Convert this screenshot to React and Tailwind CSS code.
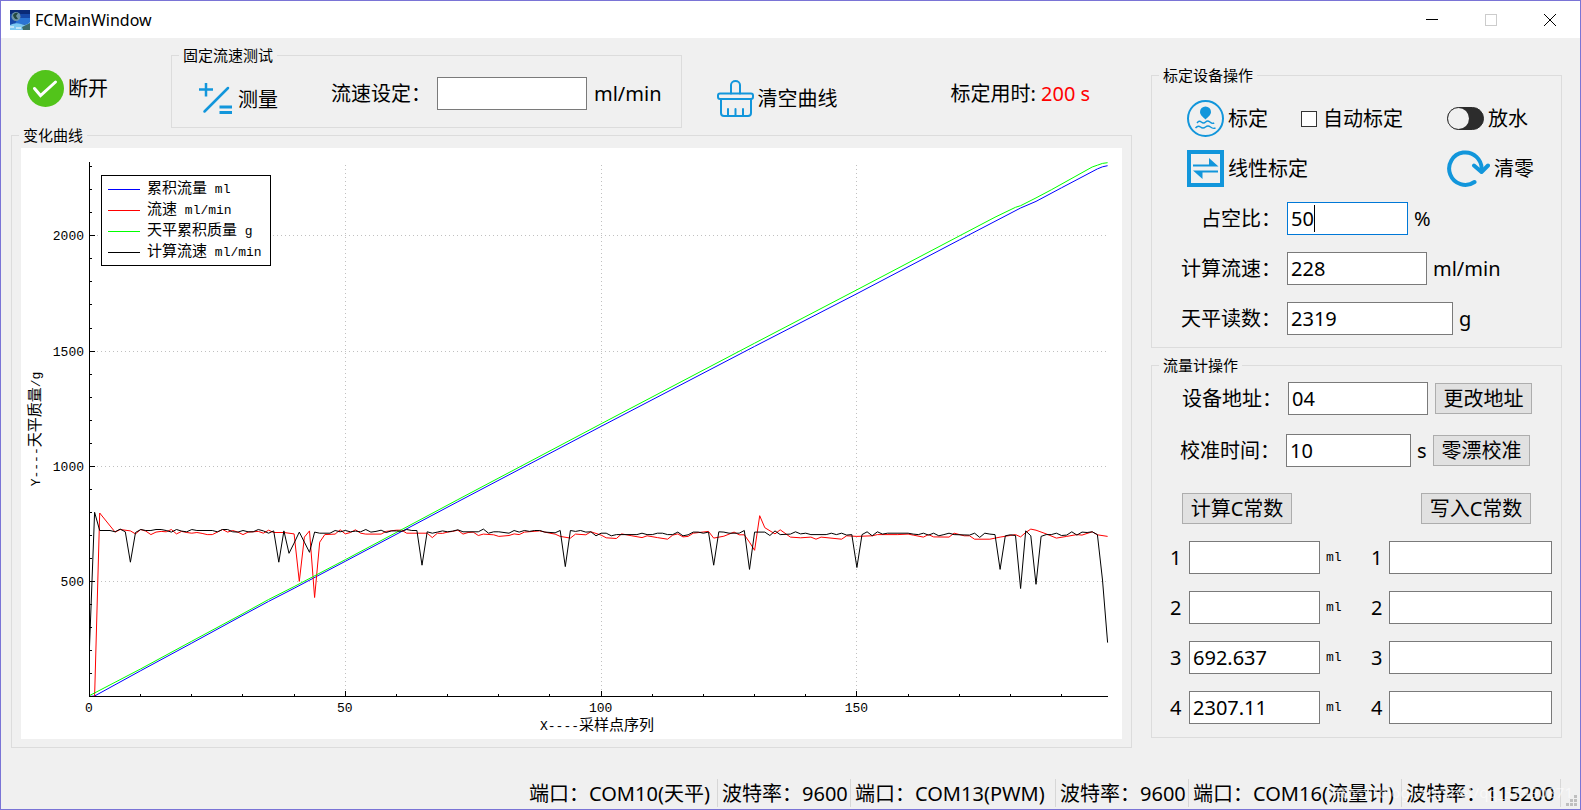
import { useState } from "react";

const X0 = 68;
const Y0 = 548;
const px = (i) => X0 + i * 5.116;
const py = (v) => Y0 - v * 0.2303;
const toPoints = (data) => data.map(([i, v]) => `${px(i).toFixed(1)},${py(v).toFixed(1)}`).join(" ");

// [sample, value]
const total = [
  [0, 0], [1, 2], [10, 112], [20, 232], [30, 353], [35, 413], [40, 470], [50, 587], [72, 846], [100, 1173],
  [130, 1520], [150, 1749], [170, 1982], [182, 2121], [185, 2150], [190, 2209], [197, 2291], [198, 2300], [199, 2305],
];

const balance = [
  [0, 4], [10, 120], [20, 240], [30, 360], [35, 421], [40, 477], [50, 594], [72, 855], [100, 1184],
  [130, 1534], [150, 1766], [177, 2081], [181, 2124], [182, 2131], [185, 2165], [188, 2200], [196, 2299],
  [197, 2307], [198, 2315], [199, 2318],
];

const flow = [
  [0, 0], [1, 0], [2, 797], [5, 714], [6, 725], [8, 719], [9, 706], [10, 725], [11, 718], [12, 703], [13, 714],
  [14, 717], [15, 715], [16, 725], [17, 706], [18, 717], [19, 712], [20, 709], [21, 712], [22, 708], [23, 703],
  [24, 703], [25, 714], [26, 725], [27, 714], [28, 721], [29, 714], [30, 703], [31, 714], [33, 717], [34, 709],
  [35, 722], [36, 712], [38, 712], [39, 709], [40, 706], [41, 500], [42, 692], [43, 719], [44, 430], [45, 670],
  [46, 703], [48, 705], [49, 724], [50, 706], [51, 712], [52, 724], [53, 709], [54, 705], [57, 705], [58, 717],
  [60, 722], [61, 722], [62, 709], [66, 709], [67, 690], [68, 709], [69, 708], [70, 714], [71, 717], [72, 722],
  [73, 705], [74, 712], [75, 714], [76, 699], [77, 705], [79, 702], [80, 695], [82, 699], [83, 706], [84, 703],
  [85, 714], [88, 719], [90, 709], [91, 705], [92, 695], [94, 688], [95, 705], [97, 702], [98, 715], [100, 701],
  [101, 689], [103, 686], [104, 706], [106, 698], [108, 690], [109, 698], [111, 690], [113, 683], [114, 701],
  [115, 706], [116, 693], [117, 695], [118, 709], [121, 717], [122, 688], [124, 696], [126, 714], [127, 702],
  [128, 702], [129, 670], [130, 635], [131, 785], [132, 733], [134, 706], [135, 724], [137, 692], [139, 689],
  [141, 692], [142, 683], [143, 692], [147, 683], [148, 698], [150, 695], [153, 698], [154, 703], [158, 703],
  [160, 705], [161, 701], [163, 692], [164, 703], [165, 693], [168, 692], [169, 709], [171, 698], [172, 698],
  [173, 683], [176, 683], [178, 692], [181, 703], [182, 693], [183, 712], [184, 727], [185, 722], [187, 706],
  [189, 688], [191, 695], [193, 703], [194, 701], [196, 715], [197, 702], [199, 695],
];

const calcFlow = [
  [0, 215], [1, 800], [2, 721], [4, 721], [5, 715], [6, 727], [7, 715], [8, 583], [9, 712], [10, 725], [11, 721],
  [12, 721], [13, 725], [14, 725], [15, 721], [16, 714], [17, 725], [18, 718], [19, 715], [20, 725], [21, 721],
  [24, 721], [25, 715], [26, 725], [27, 725], [28, 715], [29, 714], [30, 721], [31, 715], [32, 715], [33, 725],
  [34, 719], [35, 709], [36, 719], [37, 583], [38, 719], [39, 622], [40, 666], [41, 714], [42, 670], [43, 626],
  [44, 714], [45, 709], [47, 709], [48, 721], [49, 715], [50, 721], [51, 715], [52, 718], [53, 715], [54, 725],
  [55, 714], [56, 717], [57, 722], [58, 712], [59, 719], [60, 719], [61, 717], [62, 725], [63, 721], [64, 721],
  [65, 570], [66, 715], [67, 709], [68, 714], [69, 719], [70, 715], [71, 718], [72, 724], [73, 715], [76, 715],
  [77, 727], [78, 709], [79, 715], [80, 715], [82, 709], [83, 721], [84, 714], [85, 721], [86, 717], [87, 721],
  [88, 721], [89, 714], [91, 711], [92, 721], [93, 564], [94, 721], [95, 717], [96, 721], [97, 714], [98, 715],
  [99, 698], [100, 709], [101, 709], [102, 698], [103, 703], [107, 703], [108, 709], [109, 703], [110, 703],
  [111, 709], [112, 709], [113, 703], [114, 703], [115, 714], [116, 698], [117, 702], [118, 714], [119, 714],
  [120, 709], [121, 714], [122, 570], [123, 715], [124, 714], [125, 709], [127, 709], [128, 721], [129, 552],
  [130, 714], [132, 714], [133, 699], [134, 719], [135, 703], [137, 705], [138, 715], [139, 706], [140, 709],
  [141, 703], [144, 703], [145, 709], [146, 703], [147, 709], [148, 701], [149, 703], [150, 560], [151, 703],
  [152, 715], [153, 698], [154, 715], [155, 705], [156, 709], [160, 709], [161, 705], [162, 703], [163, 709],
  [164, 701], [165, 709], [166, 698], [167, 703], [168, 709], [169, 703], [172, 701], [173, 709], [174, 691],
  [175, 709], [176, 705], [177, 703], [178, 552], [179, 698], [180, 702], [181, 699], [182, 469], [183, 719],
  [184, 698], [185, 487], [186, 695], [187, 703], [188, 703], [189, 709], [190, 699], [191, 701], [192, 715],
  [193, 701], [194, 714], [195, 712], [196, 715], [197, 703], [198, 506], [199, 234],
];

const series = [
  { name: "累积流量", unit: "ml", color: "#0000ff", data: total },
  { name: "流速", unit: "ml/min", color: "#ff0000", data: flow },
  { name: "天平累积质量", unit: "g", color: "#00ff00", data: balance },
  { name: "计算流速", unit: "ml/min", color: "#000000", data: calcFlow },
];

const xTicks = Array.from({ length: 20 }, (_, i) => i * 10);
const yTicks = Array.from({ length: 24 }, (_, i) => i * 100);

function Chart() {
  return (
    <svg viewBox="0 0 1101 591" className="block w-full bg-white" role="img" aria-label="变化曲线">
      <g stroke="#c0c0c0" strokeDasharray="1 3" shapeRendering="crispEdges">
        {[50, 100, 150].map((x) => (
          <line key={x} x1={Math.round(px(x)) + 0.5} x2={Math.round(px(x)) + 0.5} y1="17" y2={Y0} />
        ))}
        {[500, 1000, 1500, 2000].map((y) => (
          <line key={y} x1={X0} x2="1086" y1={Math.round(py(y)) + 0.5} y2={Math.round(py(y)) + 0.5} />
        ))}
      </g>

      {series.map((s) => (
        <polyline key={s.name} points={toPoints(s.data)} transform="translate(0.5 0.5)" fill="none" stroke={s.color} />
      ))}

      <g stroke="#000" shapeRendering="crispEdges">
        <path d="M68.5 14V549M68 548.5H1087" />
        {xTicks.map((x) => (
          <line key={x} x1={Math.round(px(x)) + 0.5} x2={Math.round(px(x)) + 0.5} y1={Y0} y2={x % 50 ? 546 : 543} />
        ))}
        {yTicks.map((y) => (
          <line key={y} x1={X0} x2={y % 500 ? 71 : 74} y1={Math.round(py(y)) + 0.5} y2={Math.round(py(y)) + 0.5} />
        ))}
      </g>

      <g className="font-['Liberation_Mono',monospace] text-[13px]">
        {[0, 50, 100, 150].map((x) => (
          <text key={x} x={px(x)} y="564" textAnchor="middle">{x}</text>
        ))}
        {[500, 1000, 1500, 2000].map((y) => (
          <text key={y} x="63" y={py(y) + 5} textAnchor="end">{y}</text>
        ))}
      </g>

      <g className="font-['Liberation_Mono','Noto_Sans_CJK_SC',monospace] text-[13px]">
        <text x="576" y="582" textAnchor="middle">
          X----<tspan className="text-[15px]">采样点序列</tspan>
        </text>
        <text transform="translate(19 281) rotate(-90)" textAnchor="middle">
          Y----<tspan className="text-[15px]">天平质量</tspan>/g
        </text>

        <rect x="80.5" y="27.5" width="169" height="90" fill="#fff" stroke="#000" />
        {series.map((s, i) => (
          <g key={s.name}>
            <path d={`M87 ${41.5 + i * 21}H119`} stroke={s.color} shapeRendering="crispEdges" />
            <text x="126" y={45 + i * 21} xmlSpace="preserve">
              <tspan className="text-[15px]">{s.name}</tspan> {s.unit}
            </text>
          </g>
        ))}
      </g>
    </svg>
  );
}

function Group({ title, className, children }) {
  return (
    <fieldset className="min-w-0 border border-[#dcdcdc]">
      <legend className="ml-[7px] px-1 text-[15px] leading-[14px]">{title}</legend>
      <div className={className}>{children}</div>
    </fieldset>
  );
}

function TextBox({ className = "", ...props }) {
  return (
    <input
      type="text"
      className={`h-[33px] border border-[#7a7a7a] bg-white pl-[3px] outline-none ${className}`}
      {...props}
    />
  );
}

function PushButton({ className = "", children }) {
  return (
    <button className={`h-[31px] border border-[#adadad] bg-[#e1e1e1] leading-[28px] whitespace-nowrap hover:border-[#0078d7] ${className}`}>
      {children}
    </button>
  );
}

function IconButton({ icon, children }) {
  return (
    <button className="flex h-[37px] items-center gap-1 whitespace-nowrap">
      {icon}
      {children}
    </button>
  );
}

const CheckIcon = () => (
  <svg width="37" height="37" viewBox="0 0 37 37">
    <circle cx="18.5" cy="18.5" r="18.5" fill="#52c41a" />
    <path d="M7.5 18.5L13.5 25.5L28.5 12" fill="none" stroke="#fff" strokeWidth="3" strokeLinecap="round" />
  </svg>
);

const MeasureIcon = () => (
  <svg width="37" height="37" viewBox="0 0 37 37" fill="none" stroke="#1296db">
    <path d="M2 8.5H16M9 2V15.5" strokeWidth="2.5" />
    <path d="M7.5 30.5L31 7" strokeWidth="2.5" strokeLinecap="round" />
    <path d="M22.5 26H35M22.5 31.5H35" strokeWidth="2.8" />
  </svg>
);

const BrushIcon = () => (
  <svg width="37" height="37" viewBox="0 0 37 37" fill="none" stroke="#1296db" strokeWidth="2" strokeLinejoin="round" strokeLinecap="round">
    <path d="M14 13.5V5a4.5 4 0 0 1 9 0V13.5" />
    <rect x="1" y="13.5" width="35" height="5.5" rx="2" />
    <path d="M4 19V33a3 3 0 0 0 3 3H31a3 3 0 0 0 3-3V19M11 29V36M18.5 29V36M26 29V36" />
  </svg>
);

const CalibrateIcon = () => (
  <svg width="37" height="37" viewBox="0 0 37 37" fill="none" stroke="#1296db">
    <circle cx="18.5" cy="18.5" r="17.5" strokeWidth="2" />
    <path d="M18.5 19.5C16 17 13 15 13 12a5.5 5.5 0 0 1 11 0C24 15 21 17 18.5 19.5Z" fill="#1296db" stroke="none" />
    <path d="M10 23q2-3 4.3-1t4.3 0t4.3 0t4.3 1M8.5 28q2.5-3 5-1t5 0t5 0t5 1" strokeWidth="1.4" />
  </svg>
);

const SwitchIcon = () => (
  <svg width="37" height="37" viewBox="0 0 37 37">
    <rect x="0.5" y="7.5" width="36" height="22" rx="11" fill="#2c2c2c" stroke="#2c2c2c" />
    <circle cx="11.5" cy="18.5" r="10.5" fill="#f0f0f0" />
  </svg>
);

const LinearIcon = () => (
  <svg width="37" height="37" viewBox="0 0 37 37" fill="#1296db">
    <path d="M0 0H37V37H0ZM4 4V33H33V4Z" fillRule="evenodd" />
    <path d="M6 14.5H22V8L31.5 16.5H6ZM31 20.500V22.500H15.500V29L6 20.500Z" />
  </svg>
);

const ResetIcon = () => (
  <svg width="43" height="37" viewBox="0 0 43 37" fill="none" stroke="#1296db" strokeWidth="4" strokeLinecap="round" strokeLinejoin="round">
    <path d="M27.500 32A16.200 16.200 0 1 1 34.500 20" />
    <path d="M27 15.500L34.500 22L41 15.500" />
  </svg>
);

const AppIcon = () => (
  <svg width="20" height="20" viewBox="0 0 20 20">
    <rect width="20" height="20" fill="#1648a8" />
    <path d="M0 0H20V4H0Z" fill="#0a2a78" />
    <path d="M8 8H20V14H5Z" fill="#2b74d4" />
    <path d="M0 15Q5 12 11 14T20 12V20H0Z" fill="#7cc7f0" />
    <circle cx="6" cy="6.5" r="4.5" fill="#6d93a8" />
    <path d="M3 5Q5 2 8 3L6 6L8 9Q4 10 3 5Z" fill="#24483f" />
    <path d="M12 17L16 15L20 13V20H13Z" fill="#3d6b6a" />
    <path d="M0 17H4M6 18H11" stroke="#fff" />
  </svg>
);

function TitleBar() {
  return (
    <header className="flex h-[37px] items-center bg-white pr-px pl-[9px]">
      <AppIcon />
      <h1 className="ml-[5px] flex-1 text-[16px]">FCMainWindow</h1>
      <button aria-label="最小化" className="flex h-full w-[59px] items-center justify-center">
        <svg width="12" height="12" stroke="#000"><path d="M0 5.5H12" /></svg>
      </button>
      <button aria-label="最大化" disabled className="flex h-full w-[59px] items-center justify-center">
        <svg width="12" height="12" fill="none" stroke="#ccc"><rect x="0.5" y="0.5" width="11" height="11" /></svg>
      </button>
      <button aria-label="关闭" className="flex h-full w-[59px] items-center justify-center">
        <svg width="12" height="12" stroke="#000"><path d="M0 0L12 12M12 0L0 12" /></svg>
      </button>
    </header>
  );
}

function Toolbar() {
  return (
    <div className="flex h-[90px] items-start pt-[10px] whitespace-nowrap">
      <div className="ml-4 pt-[22px]">
        <IconButton icon={<CheckIcon />}>断开</IconButton>
      </div>
      <div className="ml-[63px]">
        <Group title="固定流速测试" className="flex items-start pt-[15px] pr-[19px] pb-[9px] pl-[25px]">
          <div className="pt-1">
            <IconButton icon={<MeasureIcon />}>测量</IconButton>
          </div>
          <label htmlFor="speed" className="ml-[53px] leading-[33px]">流速设定：</label>
          <TextBox id="speed" className="ml-[6px] w-[150px]" />
          <span className="ml-[7px] leading-[33px]">ml/min</span>
        </Group>
      </div>
      <div className="ml-[35px] pt-8">
        <IconButton icon={<BrushIcon />}>清空曲线</IconButton>
      </div>
      <p className="ml-[113px] pt-[29px] leading-[33px]">
        标定用时: <span className="text-[#ff0000]">200 s</span>
      </p>
    </div>
  );
}

function DevicePanel() {
  const [auto, setAuto] = useState(false);

  return (
    <Group title="标定设备操作" className="pt-[18px] pb-3">
      <div className="flex pr-[33px] pl-[35px]">
        <IconButton icon={<CalibrateIcon />}>标定</IconButton>
        <label className="ml-[33px] flex flex-1 items-center gap-[6px]">
          <input
            type="checkbox"
            checked={auto}
            onChange={(e) => setAuto(e.target.checked)}
            className="size-4 appearance-none border border-[#333] bg-white checked:bg-[#333]"
          />
          自动标定
        </label>
        <IconButton icon={<SwitchIcon />}>放水</IconButton>
      </div>
      <div className="mt-[13px] flex justify-between pr-[27px] pl-[35px]">
        <IconButton icon={<LinearIcon />}>线性标定</IconButton>
        <IconButton icon={<ResetIcon />}>清零</IconButton>
      </div>

      <div className="mt-[15px] flex flex-col gap-[17px]">
        <div className="flex items-center">
          <label htmlFor="duty" className="w-[129px] text-right">占空比：</label>
          <div className="relative ml-[6px] flex">
            <TextBox id="duty" defaultValue="50" className="w-[121px] border-[#0078d7]" />
            <span className="absolute top-[3px] left-[27px] h-[27px] w-px bg-black" />
          </div>
          <span className="ml-[6px]">%</span>
        </div>
        <div className="flex items-center">
          <label htmlFor="calc" className="w-[129px] text-right">计算流速：</label>
          <TextBox id="calc" defaultValue="228" className="ml-[6px] w-[140px]" />
          <span className="ml-[6px]">ml/min</span>
        </div>
        <div className="flex items-center">
          <label htmlFor="scale" className="w-[129px] text-right">天平读数：</label>
          <TextBox id="scale" defaultValue="2319" className="ml-[6px] w-[166px]" />
          <span className="ml-[6px]">g</span>
        </div>
      </div>
    </Group>
  );
}

const volumes = ["", "", "692.637", "2307.11"];

function MeterPanel() {
  return (
    <Group title="流量计操作" className="pt-[10px] pb-[13px]">
      <div className="flex items-center">
        <label htmlFor="addr" className="w-[130px] text-right">设备地址：</label>
        <TextBox id="addr" defaultValue="04" className="ml-[6px] w-[140px]" />
        <PushButton className="ml-[7px] w-[97px]">更改地址</PushButton>
      </div>
      <div className="mt-[19px] flex items-center">
        <label htmlFor="time" className="w-[128px] text-right">校准时间：</label>
        <TextBox id="time" defaultValue="10" className="ml-[6px] w-[125px]" />
        <span className="w-[22px] pl-[6px]">s</span>
        <PushButton className="w-[97px]">零漂校准</PushButton>
      </div>
      <div className="mt-[26px] flex justify-between px-[30px]">
        <PushButton className="w-[110px]">计算C常数</PushButton>
        <PushButton className="w-[110px]">写入C常数</PushButton>
      </div>

      <div className="mt-[17px] flex flex-col gap-[17px] pl-[18px]">
        {volumes.map((v, i) => (
          <div key={i} className="flex items-center">
            <label htmlFor={`vol${i}`} className="w-[19px]">{i + 1}</label>
            <TextBox id={`vol${i}`} defaultValue={v} className="w-[131px]" />
            <span className="ml-[6px] w-[45px] font-['Liberation_Mono',monospace] text-[13px]">ml</span>
            <label htmlFor={`c${i}`} className="w-[18px]">{i + 1}</label>
            <TextBox id={`c${i}`} className="w-[163px]" />
          </div>
        ))}
      </div>
    </Group>
  );
}

const status = [
  { text: "端口：COM10(天平)", width: "w-[193px]" },
  { text: "波特率：9600", width: "w-[133px]" },
  { text: "端口：COM13(PWM)", width: "w-[205px]" },
  { text: "波特率：9600", width: "w-[133px]" },
  { text: "端口：COM16(流量计)", width: "w-[213px]" },
  { text: "波特率：115200", width: "w-[159px]" },
];

function StatusBar() {
  return (
    <footer className="relative flex h-[30px] justify-end pr-[19px] pb-[2px] whitespace-nowrap">
      {status.map((s, i) => (
        <span key={i} className={`border-r border-[#d7d7d7] pl-1 leading-[30px] ${s.width}`}>{s.text}</span>
      ))}
      <span className="absolute top-0 right-[7px] text-[15px] leading-[26px] text-white/60">
        https://blog.csdn.net/qq_38490871
      </span>
      <svg width="11" height="11" className="absolute right-[3px] bottom-[3px]" fill="#bfbfbf">
        <path d="M8 0h3v3h-3zM4 4h3v3h-3zM8 4h3v3h-3zM0 8h3v3h-3zM4 8h3v3h-3zM8 8h3v3h-3z" />
      </svg>
    </footer>
  );
}

export default function App() {
  return (
    <div className="flex min-h-screen flex-col border border-[#7a74d6] bg-[#f0f0f0] font-['Noto_Sans','Noto_Sans_CJK_SC',sans-serif] text-[20px] leading-7 text-black">
      <TitleBar />
      <main className="flex flex-1 items-start gap-[19px] pr-[18px] pl-[10px]">
        <div className="min-w-0 flex-1">
          <Toolbar />
          <Group title="变化曲线" className="px-[9px] pt-[6px] pb-2">
            <Chart />
          </Group>
        </div>
        <div className="flex w-[411px] flex-col gap-[10px] pt-[30px]">
          <DevicePanel />
          <MeterPanel />
        </div>
      </main>
      <StatusBar />
    </div>
  );
}
